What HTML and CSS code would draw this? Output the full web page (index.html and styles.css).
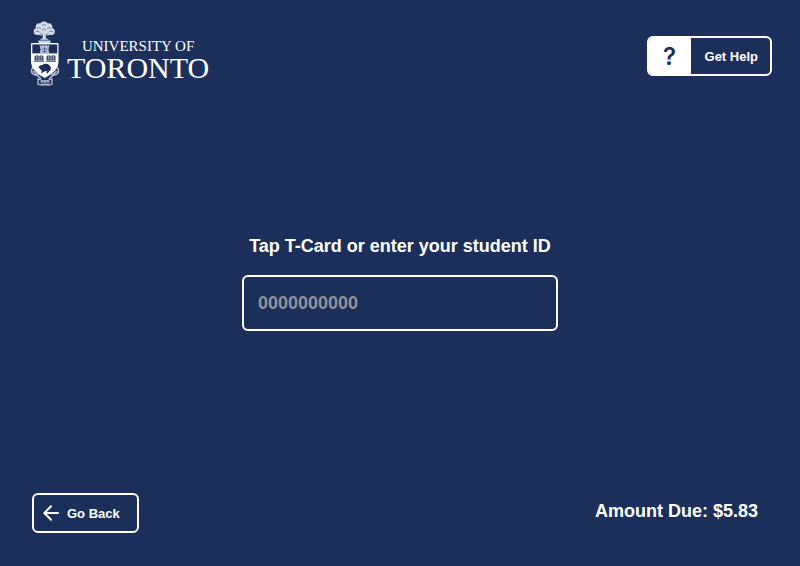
FILE: index.html
```
<!DOCTYPE html>
<html lang="en">
<head>
<meta charset="utf-8">
<meta name="viewport" content="width=device-width, initial-scale=1">
<title>Student ID payment</title>
<link rel="stylesheet" href="styles.css">
</head>
<body>
<header class="bar bar-top">
  <div class="brand">
    <svg class="crest" viewBox="0 0 30 66" aria-hidden="true">
      <!-- tree -->
      <g fill="#d3d9e9">
        <circle cx="14" cy="4.500" r="4"/><circle cx="9.500" cy="6" r="3.800"/><circle cx="18.500" cy="6" r="3.800"/>
        <circle cx="7.200" cy="10.500" r="3.500"/><circle cx="21.300" cy="10.500" r="3.500"/>
        <circle cx="11.500" cy="10.500" r="4"/><circle cx="17" cy="10.500" r="4"/>
        <path d="M13 11h2.600l.3 6 3.100 1.800H9.500l3.200-1.800z"/>
        <path d="M8.500 19.500h12V22h-12z"/>
      </g>
      <g fill="none" stroke="#1c2f5b" stroke-width=".5">
        <path d="M7 7.500q2-2 4 0M12 4.500q2-2 4 0M17 7.500q2-2 4 0M5.500 11q2-2 4 0M19 11q2-2 4 0M12 9q2-2 4 0M10 12.500l3 1.500M18.500 12.500l-3 1.500"/>
      </g>
      <!-- scroll behind the shield -->
      <g fill="none" stroke="#b9c2d9" stroke-width="1.600">
        <path d="M4 45q-4 4-1.500 7.500 3 3 6 0M26 45q4 4 1.500 7.500-3 3-6 0M3.500 50q4 5 7.500 8M26.500 50q-4 5-7.500 8"/>
        <path d="M8 58l3 1q4 2 8 0l3-1v5l-3 1q-4-1-8 0l-3-1z" stroke-width="1.300"/>
        <path d="M10 61h10M12 59v4M15 60v3M18 59v4" stroke-width=".8"/>
      </g>
      <!-- shield -->
      <path d="M1.500 22.500h26.500V41q0 9-13.250 15.500Q1.500 50 1.500 41z" fill="#fff" stroke="#fff"/>
      <path d="M2.300 23.400h25v9h-25z" fill="#1c2f5b"/>
      <path d="M9.500 23.500l2 1.500 1.500-1.500 1.500 1.500 1.500-1.500 1.500 1.500 2-1.500-1 5 1 4.500h-10l1-4.500z" fill="#b2bdd6"/>
      <path d="M12 28h5.500M12.500 30.500h4.500M14.500 26v6" stroke="#1c2f5b" stroke-width=".5"/>
      <!-- books -->
      <path d="M4.500 35q2.500-1.500 4.500 0 2-1.500 4.500 0v4.500h-9zM16.500 35q2.500-1.500 4.500 0 2-1.500 4.500 0v4.500h-9z" fill="#354773"/>
      <path d="M9 34.500v5M6.700 34.500v4M11.300 34.500v4M21 34.500v5M18.700 34.500v4M23.300 34.500v4" stroke="#fff" stroke-width=".6"/>
      <path d="M4 40.300h10M16 40.300h10" stroke="#1c2f5b" stroke-width=".8"/>
      <!-- beaver -->
      <path d="M8.500 46q1-2 4-2 2-2 5-1 3 1 3.500 4.500-.3 2-2 3l-1.500 2-1-.5.5-2-3 .5-2 1.500-1-.5.8-2-1.800-1.500z" fill="#1c2f5b"/>
    </svg>
    <div class="wordmark">
      <span class="wordmark-small">UNIVERSITY OF</span>
      <span class="wordmark-large">TORONTO</span>
    </div>
  </div>
  <button type="button" class="button help">
    <span class="help-mark" aria-hidden="true">?</span>
    <span class="help-text">Get Help</span>
  </button>
</header>

<main class="entry">
  <label class="prompt" for="student-id">Tap T-Card or enter your student ID</label>
  <input class="field" id="student-id" type="text" inputmode="numeric" placeholder="0000000000">
</main>

<footer class="bar bar-bottom">
  <button type="button" class="button back">
    <svg class="arrow" viewBox="0 0 16 16" aria-hidden="true">
      <path d="M15 8H1.500M8 1.300L1.300 8 8 14.700" fill="none" stroke="currentColor" stroke-width="2" stroke-linecap="round" stroke-linejoin="round"/>
    </svg>
    <span>Go Back</span>
  </button>
  <p class="amount">Amount Due: $5.83</p>
</footer>
</body>
</html>
```

FILE: styles.css
```
* {
  box-sizing: border-box;
}

body {
  display: flex;
  flex-direction: column;
  min-height: 100vh;
  margin: 0;
  background: #1c2f5b;
  color: #fff;
  font-family: "Liberation Sans", Arial, sans-serif;
  font-weight: bold;
}

.bar {
  display: flex;
  justify-content: space-between;
}

.bar-top {
  align-items: flex-start;
  padding: 21px 28px 0 30px;
}

.brand {
  display: flex;
  align-items: center;
  gap: 7px;
}

.crest {
  width: 30px;
  height: 66px;
}

.wordmark {
  display: flex;
  flex-direction: column;
  align-items: center;
  padding-top: 12px;
  font-family: "Liberation Serif", "Times New Roman", serif;
  font-weight: normal;
}

.wordmark-small {
  font-size: 15px;
  line-height: 16px;
}

.wordmark-large {
  font-size: 30px;
  line-height: 28px;
}

.button {
  display: flex;
  align-items: center;
  height: 40px;
  padding: 0;
  border: 2px solid #fff;
  border-radius: 6px;
  background: transparent;
  color: inherit;
  font: inherit;
  font-size: 13px;
}

.help {
  margin-top: 15px;
  overflow: hidden;
}

.help-mark {
  display: flex;
  align-items: center;
  justify-content: center;
  align-self: stretch;
  width: 42px;
  background: #fff;
  color: #1c2f5b;
  font-family: Inter, "Liberation Sans", sans-serif;
  font-size: 24px;
  font-weight: 600;
}

.help-text {
  padding: 0 12px 0 14px;
}

.entry {
  flex: 1;
  display: flex;
  flex-direction: column;
  align-items: center;
  justify-content: center;
  gap: 18px;
  padding-bottom: 14px;
}

.prompt {
  font-size: 18px;
  line-height: 22px;
}

.field {
  width: 316px;
  max-width: 90%;
  height: 56px;
  padding: 0 14px;
  border: 2px solid #fff;
  border-radius: 6px;
  background: transparent;
  color: #fff;
  font: inherit;
  font-size: 18px;
}

.field::placeholder {
  color: #929397;
  opacity: 1;
}

.bar-bottom {
  align-items: center;
  padding: 0 42px 33px 32px;
}

.back {
  gap: 8px;
  padding: 0 17px 0 9px;
}

.arrow {
  width: 16px;
  height: 16px;
}

.amount {
  margin: 0;
  padding-bottom: 4px;
  font-size: 18px;
  line-height: 22px;
}
```
